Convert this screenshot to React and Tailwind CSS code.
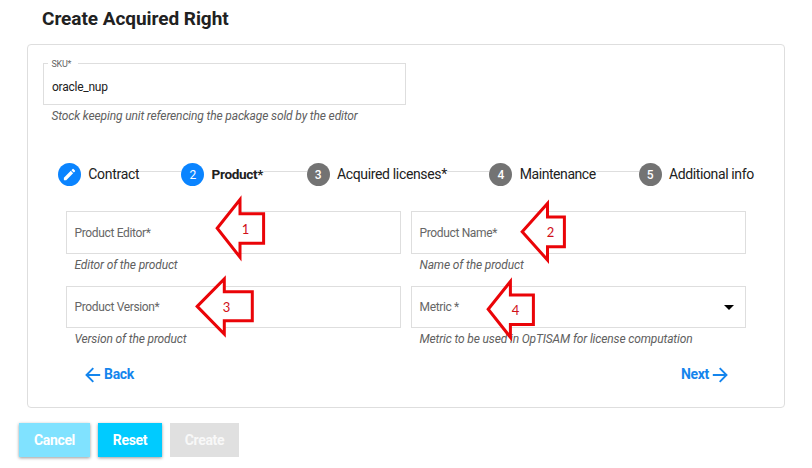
import React from "react";

const steps = [
  { label: "Contract", width: "w-[51px]", gap: "w-[42px]", tracking: "tracking-[-0.3px]", done: true },
  { label: "Product*", width: "w-[52.5px]", gap: "w-[42.5px]", tracking: "tracking-[-0.35px]", active: true },
  { label: "Acquired licenses*", width: "w-[110px]", gap: "w-[42.5px]", tracking: "tracking-[-0.34px]" },
  { label: "Maintenance", width: "w-[76.5px]", gap: "w-[42.5px]", tracking: "tracking-[-0.43px]" },
  { label: "Additional info", width: "w-[86px]", gap: "w-0", tracking: "tracking-[-0.38px]" },
];

const callouts = [
  { n: 1, points: "217.2,228.3 240,199.5 240,213.7 263.6,213.7 263.6,243.2 240,243.2 240,257.2", x: 245.5, y: 234 },
  { n: 2, points: "522.2,231.8 547.5,203.5 547.5,217 564.4,217 564.4,246.8 547.5,246.8 547.5,260", x: 550.5, y: 237 },
  { n: 3, points: "197.2,306.4 224.3,279 224.3,291.8 252.3,291.8 252.3,320.8 224.3,320.8 224.3,334", x: 226.5, y: 311.5 },
  { n: 4, points: "488.2,309.2 510.4,281.5 510.4,295 533.4,295 533.4,324.4 510.4,324.4 510.4,337.3", x: 515.5, y: 314.5 },
];

function Hint({ children }) {
  return <p className="mt-[3px] pl-[8.5px] h-4 leading-4 text-[12px] tracking-[-0.14px] italic text-[#606060] whitespace-nowrap">{children}</p>;
}

function Field({ label, hint, height, select }) {
  return (
    <div className="w-[335px]">
      <div className={`${height} flex items-center justify-between border border-[#dedede] pl-[7.5px] pr-[11px] text-[12px] tracking-[-0.35px] text-[#666]`}>
        <span>{label}</span>
        {select && <svg width="10" height="5" viewBox="0 0 10 5"><path d="M0 0h10L5 5z" fill="#000" /></svg>}
      </div>
      <Hint>{hint}</Hint>
    </div>
  );
}

function Arrow({ flip }) {
  return (
    <svg width="16" height="16" viewBox="0 0 16 16" fill="none" stroke="#1485ed" strokeWidth="1.9" className={`relative top-px ${flip ? "rotate-180" : ""}`}>
      <path d="M15.2 8H1.6M8.3 1.1L1.5 8l6.8 6.9" />
    </svg>
  );
}

export default function App() {
  return (
    <div className="relative w-[812px] h-[468px] overflow-hidden bg-white font-['Roboto',sans-serif] text-[#212121]">
      <h1 className="h-11 pl-[42px] pt-[7px] text-[19px] leading-6 font-bold tracking-[-0.05px] whitespace-nowrap">Create Acquired Right</h1>

      <section className="ml-[27px] w-[758px] h-[364px] rounded-[4px] border border-[#dedede] pl-[15px] pt-[18px]">
        <fieldset className="w-[363px] h-[42px]">
          <div className="h-[42px] border border-[#dedede] pl-2">
            <div className="-mt-[6px] -ml-1 w-[30px] h-[13px] bg-white pl-[3.5px] text-[9px] leading-[13px] tracking-[-0.3px] text-[#666]">SKU*</div>
            <div className="mt-[8px] text-[12px] leading-4 tracking-[-0.25px]">oracle_nup</div>
          </div>
          <Hint>Stock keeping unit referencing the package sold by the editor</Hint>
        </fieldset>

        <div className="mt-[58px] ml-[15px] flex items-center h-[23px]">
          {steps.map((s, i) => (
            <React.Fragment key={s.label}>
              <div className={`w-[23px] h-[23px] shrink-0 rounded-full flex items-center justify-center text-[12px] text-white ${s.done || s.active ? "bg-[#0a84ff]" : "bg-[#737373] font-medium"}`}>
                {s.done ? (
                  <svg width="15" height="15" viewBox="0 0 24 24" fill="#fff">
                    <path d="M3 17.25V21h3.75L17.81 9.94l-3.75-3.75L3 17.25zM20.71 7.04a1 1 0 0 0 0-1.41l-2.34-2.34a1 1 0 0 0-1.41 0l-1.83 1.83 3.75 3.75 1.83-1.83z" />
                  </svg>
                ) : i + 1}
              </div>
              <span className={`${s.width} ${s.tracking} ml-[7.3px] mb-[1.5px] shrink-0 whitespace-nowrap leading-5 ${s.active ? "text-[13.6px] font-bold" : "text-[14px]"}`}>{s.label}</span>
              <span className={`${s.gap} h-px mb-[6px] shrink-0 bg-[#dedede]`} />
            </React.Fragment>
          ))}
        </div>

        <div className="mt-[25px] ml-[23px] grid grid-cols-[335px_335px] gap-x-[10px]">
          <div className="h-[75px]"><Field label="Product Editor*" hint="Editor of the product" height="h-[43px]" /></div>
          <div className="h-[75px]"><Field label="Product Name*" hint="Name of the product" height="h-[43px]" /></div>
          <Field label="Product Version*" hint="Version of the product" height="h-[42px]" />
          <Field label="Metric *" hint="Metric to be used in OpTISAM for license computation" height="h-[42px]" select />
        </div>

        <div className="mt-[19px] ml-[41.5px] mr-[56px] flex justify-between text-[14px] tracking-[-0.3px] leading-4 font-bold text-[#1485ed]">
          <button className="flex items-center gap-[3.5px]"><Arrow />Back</button>
          <button className="flex items-center gap-[3px]">Next<Arrow flip /></button>
        </div>
      </section>

      <footer className="mt-[15px] ml-[19px] flex gap-2 h-[34px] text-[14px] tracking-[-0.35px] font-bold text-white">
        <button className="w-[71px] bg-[#80e2ff] shadow-[0_1px_3px_rgba(0,0,0,0.4)]">Cancel</button>
        <button className="w-[64px] bg-[#00cbff] shadow-[0_1px_3px_rgba(0,0,0,0.4)]">Reset</button>
        <button className="w-[69px] bg-[#e0e0e0] text-[#f8f8f8]">Create</button>
      </footer>

      <svg className="absolute inset-0 pointer-events-none" width="812" height="468" viewBox="0 0 812 468">
        {callouts.map((c) => (
          <g key={c.n}>
            <polygon points={c.points} fill="#fff" stroke="#ea0408" strokeWidth="3" strokeMiterlimit="10" />
            <text x={c.x} y={c.y} textAnchor="middle" fill="#d01018" className="font-['Lato',sans-serif] text-[13px]">{c.n}</text>
          </g>
        ))}
      </svg>
    </div>
  );
}
